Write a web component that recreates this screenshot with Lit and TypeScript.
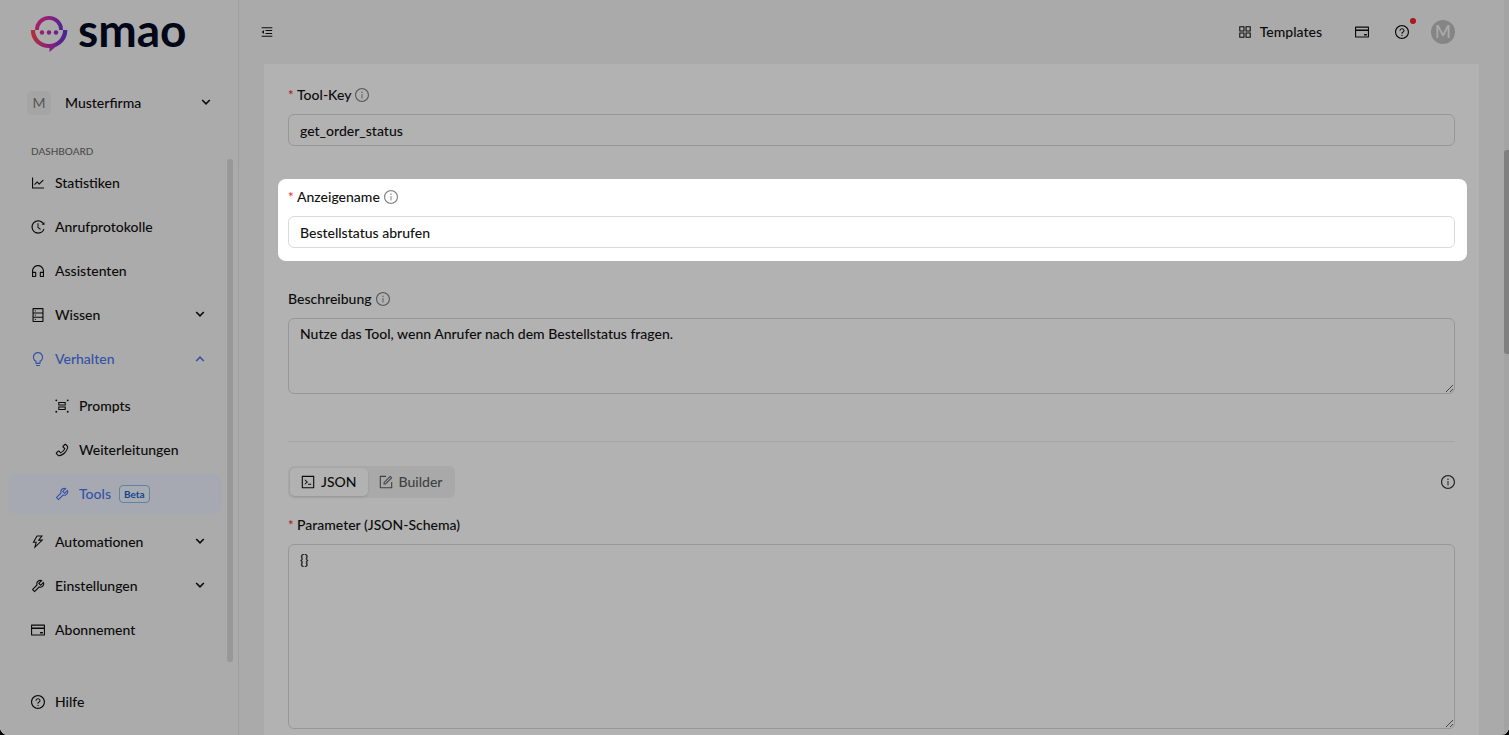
import { LitElement, html, css, svg, nothing } from "lit";
import { customElement, property, state } from "lit/decorators.js";
import { classMap } from "lit/directives/class-map.js";

const RING =
  "M512 64C264.6 64 64 264.6 64 512s200.6 448 448 448 448-200.6 448-448S759.4 64 512 64zm0 820c-205.4 0-372-166.6-372-372s166.6-372 372-372 372 166.6 372 372-166.6 372-372 372z";

const ICONS: Record<string, string> = {
  chart:
    "M888 792H200V168c0-4.4-3.6-8-8-8h-56c-4.4 0-8 3.6-8 8v688c0 4.4 3.6 8 8 8h752c4.4 0 8-3.6 8-8v-56c0-4.4-3.6-8-8-8zM305.8 637.7c3.1 3.1 8.1 3.1 11.3 0l138.3-137.6L583 628.5c3.1 3.1 8.2 3.1 11.3 0l275.4-275.3c3.1-3.1 3.1-8.2 0-11.3l-39.6-39.6a8.03 8.03 0 00-11.3 0l-230 229.9L461.4 404a8.03 8.03 0 00-11.3 0L266.3 586.7a8.03 8.03 0 000 11.3l39.5 39.7z",
  history:
    "M536.1 273H488c-4.4 0-8 3.6-8 8v275.3c0 2.6 1.2 5 3.3 6.5l165.3 120.7c3.6 2.6 8.6 1.9 11.2-1.7l28.6-39c2.7-3.7 1.9-8.7-1.7-11.2L544.1 528.5V281c0-4.4-3.6-8-8-8zm219.8 75.2l156.8 38.3c5 1.2 9.9-2.6 9.9-7.7l.8-161.5c0-6.7-7.7-10.5-12.9-6.3L752.9 334.1a8 8 0 003 14.1zm167.7 301.1l-56.7-19.5a8 8 0 00-10.1 4.8c-1.9 5.1-3.9 10.1-6 15.1-17.8 42.1-43.3 80-75.9 112.5a353 353 0 01-112.5 75.9 352.18 352.18 0 01-137.7 27.8c-47.8 0-94.1-9.3-137.7-27.8a353 353 0 01-112.5-75.9c-32.5-32.5-58-70.4-75.9-112.5A353.44 353.44 0 01171 512c0-47.8 9.3-94.2 27.8-137.8 17.8-42.1 43.3-80 75.9-112.5a353 353 0 01112.5-75.9C430.6 167.3 477 158 524.8 158s94.1 9.3 137.7 27.8A353 353 0 01775 261.7c10.2 10.3 19.8 21 28.6 32.3l59.8-46.8C784.7 146.6 662.2 81.9 524.6 82 285 82.1 92.6 276.7 95 516.4 97.4 751.9 288.9 942 524.8 942c185.5 0 343.5-117.6 403.7-282.3 1.5-4.2-.7-8.9-4.9-10.4z",
  headset:
    "M512 128c-212.1 0-384 171.9-384 384v360c0 13.3 10.7 24 24 24h184c35.3 0 64-28.7 64-64V624c0-35.3-28.7-64-64-64H200v-48c0-172.3 139.7-312 312-312s312 139.7 312 312v48H688c-35.3 0-64 28.7-64 64v208c0 35.3 28.7 64 64 64h184c13.3 0 24-10.7 24-24V512c0-212.1-171.9-384-384-384zM328 632v192H200V632h128zm496 192H696V632h128v192z",
  database:
    "M832 64H192c-17.7 0-32 14.3-32 32v832c0 17.7 14.3 32 32 32h640c17.7 0 32-14.3 32-32V96c0-17.7-14.3-32-32-32zm-600 72h560v208H232V136zm560 480H232V408h560v208zm0 272H232V680h560v208zM304 240a40 40 0 1080 0 40 40 0 10-80 0zm0 272a40 40 0 1080 0 40 40 0 10-80 0zm0 272a40 40 0 1080 0 40 40 0 10-80 0z",
  bulb:
    "M632 888H392c-4.4 0-8 3.6-8 8v32c0 17.7 14.3 32 32 32h192c17.7 0 32-14.3 32-32v-32c0-4.4-3.6-8-8-8zM512 64c-181.1 0-328 146.9-328 328 0 121.4 66 227.4 164 284.1V792c0 17.7 14.3 32 32 32h264c17.7 0 32-14.3 32-32V676.1c98-56.7 164-162.7 164-284.1 0-181.1-146.9-328-328-328zm127.9 549.8L604 634.6V752H420V634.6l-35.9-20.8C305.4 568.3 256 484.5 256 392c0-141.4 114.6-256 256-256s256 114.6 256 256c0 92.5-49.4 176.3-128.1 221.8z",
  group:
    "M84 150a62 62 0 10124 0 62 62 0 10-124 0zM816 150a62 62 0 10124 0 62 62 0 10-124 0zM84 874a62 62 0 10124 0 62 62 0 10-124 0zM816 874a62 62 0 10124 0 62 62 0 10-124 0zM272 256h480v224H272zm68 66v92h344v-92zM272 544h480v224H272zm68 66v92h344v-92z",
  phone:
    "M877.1 238.7L770.6 132.3c-13-13-30.4-20.3-48.8-20.3s-35.8 7.2-48.8 20.3L558.3 246.8c-13 13-20.3 30.5-20.3 48.9 0 18.5 7.2 35.8 20.3 48.9l89.6 89.7a405.46 405.46 0 01-86.4 127.3c-36.7 36.9-79.6 66-127.2 86.6l-89.6-89.7c-13-13-30.4-20.3-48.8-20.3a68.2 68.2 0 00-48.8 20.3L132.3 673c-13 13-20.3 30.5-20.3 48.9 0 18.5 7.2 35.8 20.3 48.9l106.4 106.4c22.2 22.2 52.8 34.9 84.2 34.9 6.5 0 12.8-.5 19.2-1.6 132.4-21.8 263.8-92.3 369.9-198.3C818 606 888.4 474.6 910.4 342.1c6.3-37.6-6.3-76.3-33.3-103.4zm-37.6 91.5c-19.5 117.9-82.9 235.5-178.4 331s-213 158.9-330.9 178.4c-14.8 2.5-30-2.5-40.8-13.2L184.9 721.9 295.7 611l119.8 120 .9.9 21.6-8a481.29 481.29 0 00285.7-285.8l8-21.6-120.8-120.7 110.8-110.9 104.5 104.5c10.8 10.8 15.8 26 13.3 40.8z",
  tool:
    "M876.6 239.5c-.5-.9-1.2-1.8-2-2.5-5-5-13.1-5-18.1 0L684.2 409.3l-67.9-67.9L788.7 169c.8-.8 1.4-1.6 2-2.5 3.6-6.1 1.6-13.9-4.5-17.5-98.2-58-226.8-44.7-311.3 39.7-67 67-89.2 162-66.5 247.4l-293 293c-3 3-2.8 7.9.3 11l169.7 169.7c3.1 3.1 8.1 3.3 11 .3l292.9-292.9c85.5 22.8 180.5.7 247.6-66.4 84.4-84.5 97.7-213.1 39.7-311.3zM786 499.8c-58.1 58.1-145.3 69.3-214.6 33.6l-8.8 8.8-.1-.1-274 274.1-79.2-79.2 230.1-230.1s0 .1.1.1l52.8-52.8c-35.7-69.3-24.5-156.5 33.6-214.6a184.2 184.2 0 01144-53.5L537 318.9a32.05 32.05 0 000 45.3l124.5 124.5a32.05 32.05 0 0045.3 0l132.8-132.8c3.7 51.8-14.4 104.8-53.6 143.9z",
  bolt:
    "M848 359.3H627.7L825.8 109c4.1-5.3.4-13-6.3-13H436c-2.8 0-5.5 1.5-6.9 4L170 547.5c-3.1 5.3.7 12 6.9 12h174.4l-89.4 357.6c-1.9 7.8 7.5 13.3 13.3 7.7L853.5 373c5.2-4.9 1.7-13.7-5.5-13.7zM378.2 732.5l60.3-241H281.1l189.6-327.4h224.6L487 427.4h211L378.2 732.5z",
  card:
    "M928 160H96c-17.7 0-32 14.3-32 32v640c0 17.7 14.3 32 32 32h832c17.7 0 32-14.3 32-32V192c0-17.7-14.3-32-32-32zm-792 72h752v120H136V232zm752 560H136V440h752v352zm-237-64h165c4.4 0 8-3.6 8-8v-72c0-4.4-3.6-8-8-8H651c-4.4 0-8 3.6-8 8v72c0 4.4 3.6 8 8 8z",
  question:
    RING +
    "M623.6 316.7C593.6 290.4 554 276 512 276s-81.6 14.5-111.6 40.7C369.2 344 352 380.7 352 420v7.6c0 4.4 3.6 8 8 8h48c4.4 0 8-3.6 8-8V420c0-44.1 43.1-80 96-80s96 35.9 96 80c0 31.1-22 59.6-56.1 72.7-21.2 8.1-39.2 22.3-52.1 40.9-13.1 19-19.9 41.8-19.9 64.9V620c0 4.4 3.6 8 8 8h48c4.4 0 8-3.6 8-8v-22.7a48.3 48.3 0 0130.9-44.8c59-22.7 97.1-74.7 97.1-132.5.1-39.3-17.1-76-48.3-103.3zM472 732a40 40 0 1080 0 40 40 0 10-80 0z",
  info:
    RING +
    "M464 336a48 48 0 1096 0 48 48 0 10-96 0zm72 112h-48c-4.4 0-8 3.6-8 8v272c0 4.4 3.6 8 8 8h48c4.4 0 8-3.6 8-8V456c0-4.4-3.6-8-8-8z",
  apps:
    "M464 144H160c-8.8 0-16 7.2-16 16v304c0 8.8 7.2 16 16 16h304c8.8 0 16-7.2 16-16V160c0-8.8-7.2-16-16-16zm-52 268H212V212h200v200zm452-268H560c-8.8 0-16 7.2-16 16v304c0 8.8 7.2 16 16 16h304c8.8 0 16-7.2 16-16V160c0-8.8-7.2-16-16-16zm-52 268H612V212h200v200zM464 544H160c-8.8 0-16 7.2-16 16v304c0 8.8 7.2 16 16 16h304c8.8 0 16-7.2 16-16V560c0-8.8-7.2-16-16-16zm-52 268H212V612h200v200zm452-268H560c-8.8 0-16 7.2-16 16v304c0 8.8 7.2 16 16 16h304c8.8 0 16-7.2 16-16V560c0-8.8-7.2-16-16-16zm-52 268H612V612h200v200z",
  fold:
    "M408 442h480c4.4 0 8-3.6 8-8v-56c0-4.4-3.6-8-8-8H408c-4.4 0-8 3.6-8 8v56c0 4.4 3.6 8 8 8zm-8 204c0 4.4 3.6 8 8 8h480c4.4 0 8-3.6 8-8v-56c0-4.4-3.6-8-8-8H408c-4.4 0-8 3.6-8 8v56zm504-486H120c-4.4 0-8 3.6-8 8v56c0 4.4 3.6 8 8 8h784c4.4 0 8-3.6 8-8v-56c0-4.4-3.6-8-8-8zm0 632H120c-4.4 0-8 3.6-8 8v56c0 4.4 3.6 8 8 8h784c4.4 0 8-3.6 8-8v-56c0-4.4-3.6-8-8-8zM115.4 518.9L271.7 642c5.8 4.6 14.4.5 14.4-6.9V388.9c0-7.4-8.5-11.5-14.4-6.9L115.4 505.1a8.74 8.74 0 000 13.8z",
  code:
    "M516 673c0 4.4 3.4 8 7.5 8h185c4.1 0 7.5-3.6 7.5-8v-48c0-4.4-3.4-8-7.5-8h-185c-4.1 0-7.5 3.6-7.5 8v48zm-194.9 6.1l192-161c3.8-3.2 3.8-9.1 0-12.3l-192-160.9A7.95 7.95 0 00308 351v62.7c0 2.4 1 4.6 2.9 6.1L420.7 512l-109.8 92.2a8.1 8.1 0 00-2.9 6.1V673c0 6.8 7.9 10.5 13.1 6.1zM880 112H144c-17.7 0-32 14.3-32 32v736c0 17.7 14.3 32 32 32h736c17.7 0 32-14.3 32-32V144c0-17.7-14.3-32-32-32zm-40 728H184V184h656v656z",
  form:
    "M904 512h-56c-4.4 0-8 3.6-8 8v320H184V184h320c4.4 0 8-3.6 8-8v-56c0-4.4-3.6-8-8-8H144c-17.7 0-32 14.3-32 32v736c0 17.7 14.3 32 32 32h736c17.7 0 32-14.3 32-32V520c0-4.4-3.6-8-8-8zM355.9 534.9L354 653.8c-.1 8.9 7.1 16.2 16 16.2h.4l118-2.9c2-.1 4-.9 5.4-2.3l415.9-415c3.1-3.1 3.1-8.2 0-11.3L785.4 114.3c-1.6-1.6-3.6-2.3-5.7-2.3s-4.1.8-5.7 2.3l-415.8 415a8.3 8.3 0 00-2.3 5.6zm63.5 23.6L779.7 199l45.2 45.1-360.5 359.7-45.7 1.1.7-46.4z",
};

@customElement("ui-icon")
class UiIcon extends LitElement {
  @property() name = "";

  static styles = css`
    :host {
      display: inline-flex;
      flex: none;
      width: 14px;
      height: 14px;
    }
    .glyph {
      display: block;
      width: 100%;
      height: 100%;
      fill: currentColor;
      fill-rule: evenodd;
    }
  `;

  render() {
    return html`<svg class="glyph" viewBox="64 64 896 896" aria-hidden="true">
      ${svg`<path d=${ICONS[this.name] ?? ""}></path>`}
    </svg>`;
  }
}

interface NavItem {
  label: string;
  icon: string;
  open?: boolean;
  badge?: string;
  current?: boolean;
  children?: NavItem[];
}

const NAV: NavItem[] = [
  { label: "Statistiken", icon: "chart" },
  { label: "Anrufprotokolle", icon: "history" },
  { label: "Assistenten", icon: "headset" },
  { label: "Wissen", icon: "database", children: [] },
  {
    label: "Verhalten",
    icon: "bulb",
    open: true,
    children: [
      { label: "Prompts", icon: "group" },
      { label: "Weiterleitungen", icon: "phone" },
      { label: "Tools", icon: "tool", badge: "Beta", current: true },
    ],
  },
  { label: "Automationen", icon: "bolt", children: [] },
  { label: "Einstellungen", icon: "tool", children: [] },
  { label: "Abonnement", icon: "card" },
];

const chevron = (up = false) => html`<svg
  class="chevron"
  viewBox="0 0 10 10"
  aria-hidden="true"
>
  <path d=${up ? "M1.2 7L5 3.2 8.8 7" : "M1.2 2L5 5.8 8.8 2"}></path>
</svg>`;

@customElement("app-sidebar")
class AppSidebar extends LitElement {
  static styles = css`
    :host {
      display: flex;
      flex-direction: column;
      flex: none;
      width: 239px;
      box-sizing: border-box;
      border-right: 1px solid #e4e4e4;
      background: #f5f5f5;
    }
    .brand {
      display: flex;
      align-items: center;
      gap: 10px;
      height: 64px;
      padding: 4px 0 0 30px;
      box-sizing: border-box;
      color: #020b24;
      text-decoration: none;
    }
    .mark {
      flex: none;
      width: 38px;
      height: 38px;
    }
    .word {
      font-size: 46px;
      font-weight: 700;
      line-height: 40px;
      margin-top: -8px;
    }
    button {
      font: inherit;
      color: inherit;
      border: 0;
      background: none;
      cursor: pointer;
      text-align: left;
    }
    .org {
      display: flex;
      align-items: center;
      gap: 14px;
      margin-top: 23px;
      padding: 4px 27px;
      height: 32px;
    }
    .org-badge {
      display: grid;
      place-items: center;
      width: 24px;
      height: 24px;
      border-radius: 5px;
      background: #ececec;
      color: #7d7d7d;
      font-weight: 400;
    }
    .grow {
      flex: 1;
    }
    .chevron {
      width: 10px;
      height: 10px;
      fill: none;
      stroke: currentColor;
      stroke-width: 1.6;
    }
    .heading {
      margin: 23px 0 0;
      padding: 0 31px;
      font-size: 10px;
      font-weight: 500;
      line-height: 18px;
      color: #6f6f6f;
    }
    .scroll {
      position: relative;
      flex: 1;
      padding-top: 3px;
    }
    .thumb {
      position: absolute;
      top: -1px;
      right: 5px;
      width: 6px;
      height: 503px;
      border-radius: 3px;
      background: #dadada;
    }
    ul {
      display: flex;
      flex-direction: column;
      gap: 4px;
      margin: 0;
      padding: 0 16px 0 8px;
      list-style: none;
    }
    ul ul {
      padding: 7px 0 4px;
    }
    .item {
      display: flex;
      align-items: center;
      gap: 10px;
      width: 100%;
      height: 40px;
      box-sizing: border-box;
      padding: 0 17px 0 23px;
      border-radius: 8px;
      color: inherit;
      text-decoration: none;
    }
    ul ul .item {
      padding-left: 47px;
    }
    .item.accent {
      color: #4c76ee;
    }
    .current {
      background: #eff3ff;
    }
    .tag {
      margin-left: -2px;
      padding: 0 4px;
      border: 1px solid #84bdf0;
      border-radius: 4px;
      background: #eef6ff;
      color: #1d62cf;
      font-size: 10px;
      font-weight: 700;
      line-height: 16px;
    }
    .foot {
      padding: 0 8px 13px;
    }
  `;

  private item(it: NavItem): unknown {
    const classes = {
      item: true,
      accent: !!(it.open || it.current),
      current: !!it.current,
    };
    const body = html`<ui-icon name=${it.icon}></ui-icon><span>${it.label}</span>`;
    if (it.children) {
      return html`<li>
        <button class=${classMap(classes)} aria-expanded=${it.open ? "true" : "false"}>
          ${body}<span class="grow"></span>${chevron(it.open)}
        </button>
        ${it.open
          ? html`<ul>
              ${it.children.map((c) => this.item(c))}
            </ul>`
          : nothing}
      </li>`;
    }
    return html`<li>
      <a class=${classMap(classes)} href="#">
        ${body}${it.badge ? html`<span class="tag">${it.badge}</span>` : nothing}
      </a>
    </li>`;
  }

  render() {
    return html`
      <a class="brand" href="#">
        <svg class="mark" viewBox="0 0 38 38" aria-hidden="true">
          <defs>
            <linearGradient id="low" x1="0" x2="1">
              <stop offset="0" stop-color="#ff4a4a" />
              <stop offset=".5" stop-color="#c42fb4" />
              <stop offset="1" stop-color="#5b36d8" />
            </linearGradient>
            <linearGradient id="top" x1="0" x2="1">
              <stop offset="0" stop-color="#f0308a" />
              <stop offset=".5" stop-color="#d12fb4" />
              <stop offset="1" stop-color="#6a35d0" />
            </linearGradient>
          </defs>
          <path
            fill="url(#top)"
            d="M5 15a14 14 0 0 1 28 0h-3.800a10.200 10.200 0 0 0-20.400 0z"
          />
          <path
            fill="url(#low)"
            d="M.8 15h4.200a14 14 0 0 0 28 0h4.300c0 8.500-5 14.600-12.300 17.200L19.500 37v-4C8.500 33 .8 25.500.8 15z"
          />
          <circle cx="12" cy="17.500" r="2.200" fill="#dc2fa0" />
          <circle cx="19" cy="17.500" r="2.200" fill="#c12fb4" />
          <circle cx="26" cy="17.500" r="2.200" fill="#9530c4" />
        </svg>
        <span class="word">smao</span>
      </a>
      <button class="org">
        <span class="org-badge">M</span>
        <span class="grow">Musterfirma</span>
        ${chevron()}
      </button>
      <h2 class="heading">DASHBOARD</h2>
      <nav class="scroll">
        <ul>
          ${NAV.map((n) => this.item(n))}
        </ul>
        <span class="thumb"></span>
      </nav>
      <div class="foot">
        <a class="item" href="#"><ui-icon name="question"></ui-icon><span>Hilfe</span></a>
      </div>
    `;
  }
}

@customElement("app-header")
class AppHeader extends LitElement {
  static styles = css`
    :host {
      display: flex;
      align-items: center;
      justify-content: space-between;
      height: 64px;
      padding: 0 54px 0 8px;
    }
    button {
      position: relative;
      display: flex;
      align-items: center;
      justify-content: center;
      gap: 8px;
      min-width: 40px;
      height: 40px;
      padding: 0;
      border: 0;
      background: none;
      color: inherit;
      font: inherit;
      cursor: pointer;
    }
    .actions {
      display: flex;
      align-items: center;
    }
    .templates {
      padding: 0 20px;
    }
    .dot {
      position: absolute;
      top: 6px;
      right: 6px;
      width: 6px;
      height: 6px;
      border-radius: 50%;
      background: #f5222d;
    }
    .avatar {
      min-width: 24px;
      height: 24px;
      margin-left: 9px;
      border-radius: 50%;
      background: #bfbfbf;
      color: #f5f5f5;
      font-size: 17px;
    }
    .fold {
      width: 12px;
      height: 12px;
    }
  `;

  render() {
    return html`
      <button aria-label="Menü einklappen">
        <ui-icon class="fold" name="fold"></ui-icon>
      </button>
      <div class="actions">
        <button class="templates"><ui-icon name="apps"></ui-icon>Templates</button>
        <button aria-label="Abonnement"><ui-icon name="card"></ui-icon></button>
        <button aria-label="Hilfe">
          <ui-icon name="question"></ui-icon><span class="dot"></span>
        </button>
        <button class="avatar">M</button>
      </div>
    `;
  }
}

@customElement("app-root")
class AppRoot extends LitElement {
  @state() private mode: "json" | "builder" = "json";

  static styles = css`
    :host {
      display: block;
      background: #000;
      font-family: Lato, "Noto Sans", sans-serif;
      font-size: 14px;
      font-weight: 500;
      line-height: 22px;
      color: #111;
    }
    .shell {
      position: relative;
      display: flex;
      height: 100vh;
      overflow: hidden;
      border-radius: 0 0 8px 8px;
      background: #f4f4f4;
    }
    .main {
      flex: 1;
      min-width: 0;
    }
    .card {
      margin: 0 30px 0 25px;
      padding: 20px 24px 40px;
      background: #fff;
    }
    .field {
      display: flex;
      flex-direction: column;
      gap: 8px;
    }
    .field + .field {
      margin-top: 40px;
    }
    /* The guided tour dims everything except the highlighted field. */
    .field.spot {
      position: relative;
      z-index: 2;
      margin: 33px -12px -13px -10px;
      padding: 7px 12px 13px 10px;
      border-radius: 8px;
      background: #fff;
      box-shadow: 0 0 0 200vmax rgba(0, 0, 0, 0.3);
    }
    label {
      display: flex;
      align-items: center;
    }
    .required::before {
      content: "*";
      width: 9px;
      color: #f5222d;
      font-size: 13px;
    }
    .hint {
      margin-left: 4px;
      color: #858585;
    }
    input[type="text"],
    textarea {
      display: block;
      width: 100%;
      box-sizing: border-box;
      margin: 0;
      border: 1px solid #d9d9d9;
      border-radius: 6px;
      background: #fff;
      color: inherit;
      font: inherit;
      outline: none;
    }
    input[type="text"] {
      height: 32px;
      padding: 4px 11px;
    }
    textarea {
      padding: 4px 11px;
    }
    .short {
      height: 76px;
    }
    .tall {
      height: 185px;
    }
    hr {
      margin: 47px 0 24px;
      border: 0;
      border-top: 1px solid #ededed;
    }
    .bar {
      display: flex;
      align-items: center;
      justify-content: space-between;
      margin-bottom: 16px;
    }
    .segments {
      display: flex;
      margin: 0;
      padding: 2px;
      border: 0;
      border-radius: 6px;
      background: #f3f3f3;
    }
    .segment {
      gap: 6px;
      height: 28px;
      padding: 0 11px;
      border-radius: 5px;
      color: #5e5e5e;
      cursor: pointer;
    }
    .segment.on {
      background: #fff;
      color: #111;
      box-shadow: 0 1px 3px rgba(0, 0, 0, 0.12);
    }
    .segment input {
      position: absolute;
      opacity: 0;
      pointer-events: none;
    }
    .about {
      display: flex;
      padding: 0;
      border: 0;
      background: none;
      color: #333;
    }
    .track {
      position: absolute;
      top: 0;
      right: 0;
      width: 5px;
      height: 100%;
      background: #ebebeb;
    }
    .thumb {
      position: absolute;
      top: 150px;
      right: 0;
      width: 5px;
      height: 204px;
      border-radius: 3px 0 0 3px;
      background: #b8b8b8;
    }
  `;

  private segment(value: "json" | "builder", icon: string, text: string) {
    const on = this.mode === value;
    return html`<label class=${classMap({ segment: true, on })}>
      <input
        type="radio"
        name="mode"
        .checked=${on}
        @change=${() => (this.mode = value)}
      />
      <ui-icon name=${icon}></ui-icon>${text}
    </label>`;
  }

  render() {
    return html`
      <div class="shell">
        <app-sidebar></app-sidebar>
        <main class="main">
          <app-header></app-header>
          <form class="card">
            <div class="field">
              <label class="required" for="key"
                >Tool-Key<ui-icon class="hint" name="info"></ui-icon
              ></label>
              <input id="key" type="text" value="get_order_status" />
            </div>
            <div class="field spot">
              <label class="required" for="name"
                >Anzeigename<ui-icon class="hint" name="info"></ui-icon
              ></label>
              <input id="name" type="text" value="Bestellstatus abrufen" />
            </div>
            <div class="field">
              <label for="description"
                >Beschreibung<ui-icon class="hint" name="info"></ui-icon
              ></label>
              <textarea
                class="short"
                id="description"
                .value=${"Nutze das Tool, wenn Anrufer nach dem Bestellstatus fragen."}
              ></textarea>
            </div>
            <hr />
            <div class="bar">
              <fieldset class="segments" aria-label="Eingabemodus">
                ${this.segment("json", "code", "JSON")}
                ${this.segment("builder", "form", "Builder")}
              </fieldset>
              <button class="about" type="button" aria-label="Info">
                <ui-icon name="info"></ui-icon>
              </button>
            </div>
            <div class="field">
              <label class="required" for="schema">Parameter (JSON-Schema)</label>
              <textarea class="tall" id="schema" .value=${"{}"}></textarea>
            </div>
          </form>
        </main>
        <div class="track"></div>
        <div class="thumb"></div>
      </div>
    `;
  }
}
